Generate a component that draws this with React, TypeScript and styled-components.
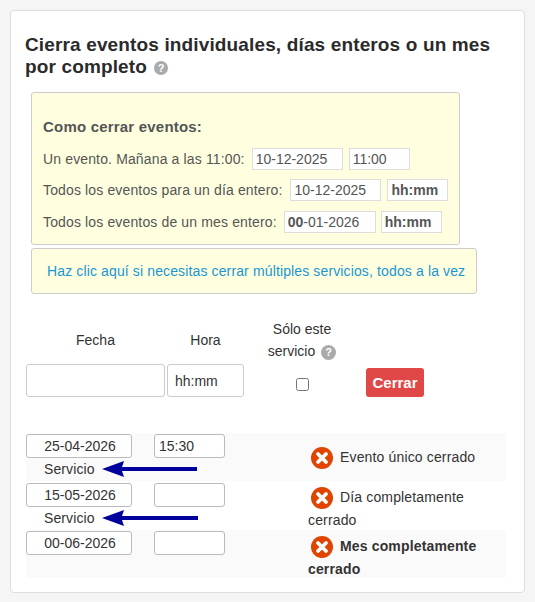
import React from "react";
import styled, { createGlobalStyle } from "styled-components";

const GlobalStyle = createGlobalStyle`
  html, body {
    margin: 0;
    padding: 0;
    background: #f5f5f5;
  }
  body {
    font-family: "Liberation Sans", Arial, sans-serif;
    font-size: 14px;
    line-height: 22px;
    color: #333;
  }
`;

const closedRows = [
  { date: "25-04-2026", time: "15:30", service: true, text: "Evento único cerrado", bold: false, height: 48, top: 1, pad: 12, shade: true, arrow: 95 },
  { date: "15-05-2026", time: "", service: true, text: "Día completamente cerrado", bold: false, height: 49, top: 2, pad: 3, shade: false, arrow: 96 },
  { date: "00-06-2026", time: "", service: false, text: "Mes completamente cerrado", bold: true, height: 48, top: 1, pad: 4, shade: true, arrow: 0 },
];

const CloseIcon = () => (
  <StatusSvg viewBox="0 0 22 22" width="22" height="22">
    <circle cx="11" cy="11" r="11" fill="#e04400" />
    <path d="M7 7l8 8M15 7l-8 8" stroke="#fff" strokeWidth="3.8" strokeLinecap="round" />
  </StatusSvg>
);

const BlueArrow = ({ width }: { width: number }) => (
  <ArrowSvg viewBox={`0 0 ${width} 18`} width={width} height="18">
    <path d={`M0 9L22 1L20 7H${width}V11H20L22 17Z`} fill="#00009c" />
  </ArrowSvg>
);

const App = () => {
  return (
    <>
      <GlobalStyle />
      <Card>
        <Title>
          Cierra eventos individuales, días enteros o un mes por completo<Help $size={14} $gap={7} $lift={1}>?</Help>
        </Title>
        <HowTo>
          <HowToTitle>Como cerrar eventos:</HowToTitle>
          <HowToRow $top={0}>
            Un evento. Mañana a las 11:00:
            <Sample $width={91} $left={7}>10-12-2025</Sample>
            <Sample $width={61} $left={6}>11:00</Sample>
          </HowToRow>
          <HowToRow $top={9}>
            Todos los eventos para un día entero:
            <Sample $width={91} $left={8}>10-12-2025</Sample>
            <Sample $width={61} $left={6}><b>hh:mm</b></Sample>
          </HowToRow>
          <HowToRow $top={10}>
            Todos los eventos de un mes entero:
            <Sample $width={92} $left={7}><b>00</b>-01-2026</Sample>
            <Sample $width={61} $left={5}><b>hh:mm</b></Sample>
          </HowToRow>
        </HowTo>
        <LinkBox>
          <LinkText href="#">Haz clic aquí si necesitas cerrar múltiples servicios, todos a la vez</LinkText>
        </LinkBox>

        <FormGrid>
          <HeadCell>Fecha</HeadCell>
          <HeadCell>Hora</HeadCell>
          <HeadCell>
            Sólo este
            <br />
            servicio<Help $size={15} $gap={6} $lift={0}>?</Help>
          </HeadCell>
          <span />
          <FormInput type="text" />
          <FormInput type="text" defaultValue="hh:mm" />
          <CheckCell>
            <Check type="checkbox" />
          </CheckCell>
          <CloseButton>Cerrar</CloseButton>
        </FormGrid>

        <ClosedList>
          {closedRows.map((row) => (
            <ClosedRow key={row.date} $height={row.height} $top={row.top} $shade={row.shade}>
              <RowLeft>
                <RowFields>
                  <DateField>{row.date}</DateField>
                  <TimeField>{row.time}</TimeField>
                </RowFields>
                {row.service && (
                  <ServiceLine>
                    Servicio
                    <BlueArrow width={row.arrow} />
                  </ServiceLine>
                )}
              </RowLeft>
              <Status $bold={row.bold} $pad={row.pad}>
                <CloseIcon />
                {row.text}
              </Status>
            </ClosedRow>
          ))}
        </ClosedList>
      </Card>
    </>
  );
};

export default App;

const Card = styled.div`
  box-sizing: border-box;
  width: 515px;
  height: 583px;
  margin: 10px 0 0 10px;
  padding: 23px 19px 0 15px;
  background: #fff;
  border: 1px solid #ddd;
  border-radius: 4px;
`;

const Title = styled.h3`
  margin: 0 0 14px -1px;
  font-size: 19px;
  line-height: 22px;
  font-weight: 700;
  letter-spacing: 0.14px;
  color: #2b2b2b;
`;

const Help = styled.span<{ $size: number; $gap: number; $lift: number }>`
  display: inline-block;
  width: ${(p) => p.$size}px;
  height: ${(p) => p.$size}px;
  margin-left: ${(p) => p.$gap}px;
  border-radius: 50%;
  background: #aaa;
  color: #fff;
  font-size: 11px;
  font-weight: 700;
  letter-spacing: 0;
  line-height: ${(p) => p.$size}px;
  text-align: center;
  vertical-align: ${(p) => p.$lift}px;
`;

const HowTo = styled.div`
  box-sizing: border-box;
  width: 429px;
  height: 153px;
  margin-left: 5px;
  padding: 23px 11px 0 11px;
  background: #ffffe0;
  border: 1px solid #ccc;
  border-radius: 3px;
  color: #555;
`;

const HowToTitle = styled.div`
  font-size: 15px;
  font-weight: 700;
  line-height: 22px;
  letter-spacing: 0.2px;
  margin-bottom: 10px;
`;

const HowToRow = styled.div<{ $top: number }>`
  display: flex;
  align-items: center;
  height: 22px;
  margin-top: ${(p) => p.$top}px;
  letter-spacing: 0.14px;
  white-space: nowrap;
`;

const Sample = styled.span<{ $width: number; $left: number }>`
  box-sizing: border-box;
  width: ${(p) => p.$width}px;
  height: 22px;
  margin-left: ${(p) => p.$left}px;
  padding-left: 3px;
  flex: none;
  background: #fff;
  border: 1px solid #ddd;
  color: #555;
  letter-spacing: 0;
  line-height: 20px;
`;

const LinkBox = styled.div`
  box-sizing: border-box;
  width: 446px;
  height: 46px;
  margin: 3px 0 0 5px;
  padding: 11px 0 0 15px;
  background: #ffffe0;
  border: 1px solid #ccc;
  border-radius: 3px;
`;

const LinkText = styled.a`
  color: #1a96d4;
  text-decoration: none;
  letter-spacing: 0.13px;
  white-space: nowrap;
`;

const FormGrid = styled.div`
  display: grid;
  grid-template-columns: 139px 77px 112px 64px;
  column-gap: 2px;
  row-gap: 2px;
  margin-top: 24px;
`;

const HeadCell = styled.div`
  align-self: center;
  text-align: center;
  line-height: 22px;
  color: #333;
`;

const FormInput = styled.input`
  box-sizing: border-box;
  width: 100%;
  height: 33px;
  padding: 0 7px;
  background: #fff;
  border: 1px solid #ccc;
  border-radius: 3px;
  outline: none;
  font-family: inherit;
  font-size: 14px;
  color: #333;
`;

const CheckCell = styled.div`
  display: flex;
  justify-content: center;
  height: 33px;
  padding-top: 14px;
  box-sizing: border-box;
`;

const Check = styled.input`
  width: 13px;
  height: 13px;
  margin: 0;
`;

const CloseButton = styled.button`
  align-self: end;
  height: 29px;
  margin-left: 6px;
  padding: 0;
  background: #e04848;
  border: none;
  border-radius: 3px;
  color: #fff;
  font-family: inherit;
  font-size: 15px;
  font-weight: 700;
`;

const ClosedList = styled.div`
  width: 480px;
  margin-top: 36px;
`;

const ClosedRow = styled.div<{ $height: number; $top: number; $shade: boolean }>`
  box-sizing: border-box;
  display: flex;
  height: ${(p) => p.$height}px;
  padding-top: ${(p) => p.$top}px;
  background: ${(p) => (p.$shade ? "#fafafa" : "#fff")};
`;

const RowLeft = styled.div`
  flex: none;
  width: 282px;
`;

const RowFields = styled.div`
  display: flex;
  gap: 22px;
`;

const DateField = styled.div`
  box-sizing: border-box;
  width: 106px;
  height: 24px;
  padding-left: 2px;
  background: #fff;
  border: 1px solid #bbb;
  border-radius: 3px;
  text-align: center;
  line-height: 22px;
`;

const TimeField = styled.div`
  box-sizing: border-box;
  width: 71px;
  height: 24px;
  padding-left: 4px;
  background: #fff;
  border: 1px solid #bbb;
  border-radius: 3px;
  line-height: 22px;
`;

const ServiceLine = styled.div`
  display: flex;
  align-items: center;
  height: 22px;
  padding-left: 18px;
  gap: 7px;
  letter-spacing: 0.1px;
`;

const ArrowSvg = styled.svg`
  display: block;
  flex: none;
`;

const Status = styled.div<{ $bold: boolean; $pad: number }>`
  width: 197px;
  font-weight: ${(p) => (p.$bold ? 700 : 400)};
  line-height: 22px;
  letter-spacing: 0.15px;
  padding-top: ${(p) => p.$pad}px;
`;

const StatusSvg = styled.svg`
  vertical-align: middle;
  margin: 0 7px 0 3px;
`;
